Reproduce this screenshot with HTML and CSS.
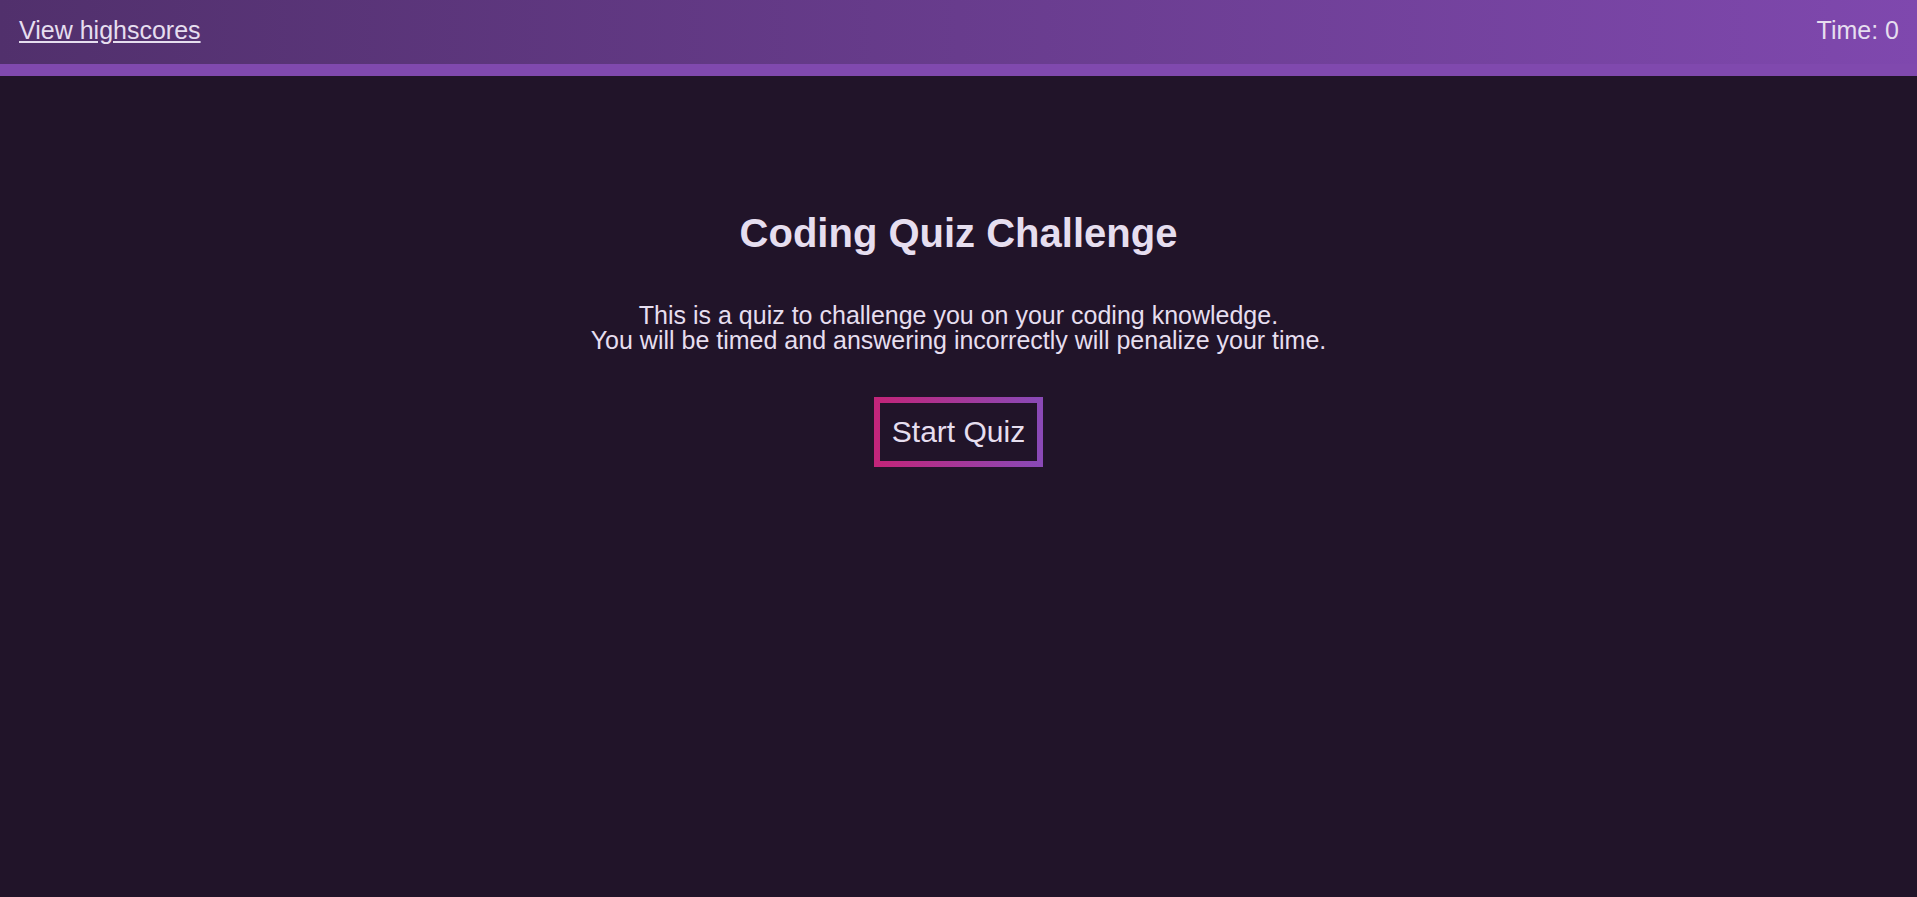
FILE: index.html
```html
<!DOCTYPE html>
<html lang="en">
<head>
<meta charset="utf-8">
<title>Coding Quiz Challenge</title>
<link rel="stylesheet" href="styles.css">
</head>
<body>
<header class="topbar">
  <a class="highscores-link" href="#">View highscores</a>
  <div class="timer">Time: <span class="timer-value">0</span></div>
</header>
<main class="intro">
  <h1 class="intro-title">Coding Quiz Challenge</h1>
  <p class="intro-text">This is a quiz to challenge you on your coding knowledge.<br>You will be timed and answering incorrectly will penalize your time.</p>
  <button class="start-btn" type="button">Start Quiz</button>
</main>
</body>
</html>
```
FILE: styles.css
```css
html, body {
  margin: 0;
  padding: 0;
}

body {
  background: #211429;
  color: #e6deef;
  font-family: "Liberation Sans", Arial, sans-serif;
  min-height: 100vh;
}

.topbar {
  box-sizing: border-box;
  height: 76px;
  display: flex;
  align-items: flex-start;
  justify-content: space-between;
  padding: 16px 18px 0 19px;
  background: linear-gradient(to right, #51306c, #7f48ae);
  border-bottom: 12px solid #8049ae;
  font-size: 25px;
  line-height: normal;
}

.highscores-link {
  color: #e6deef;
  text-decoration: underline;
  text-underline-offset: 2px;
}

.timer {
  color: #e6deef;
}

.intro {
  display: flex;
  flex-direction: column;
  align-items: center;
  text-align: center;
  padding-top: 135px;
}

.intro-title {
  margin: 0;
  font-size: 40px;
  font-weight: bold;
  line-height: normal;
}

.intro-text {
  margin: 47px 0 44px;
  font-size: 25px;
  line-height: 25px;
}

.start-btn {
  font-family: "Liberation Sans", Arial, sans-serif;
  font-size: 30px;
  line-height: normal;
  color: #e6deef;
  background: transparent;
  padding: 12px;
  border: 6px solid transparent;
  border-image: linear-gradient(to right, #c1257a, #8a49b6) 1;
  cursor: pointer;
}
```
